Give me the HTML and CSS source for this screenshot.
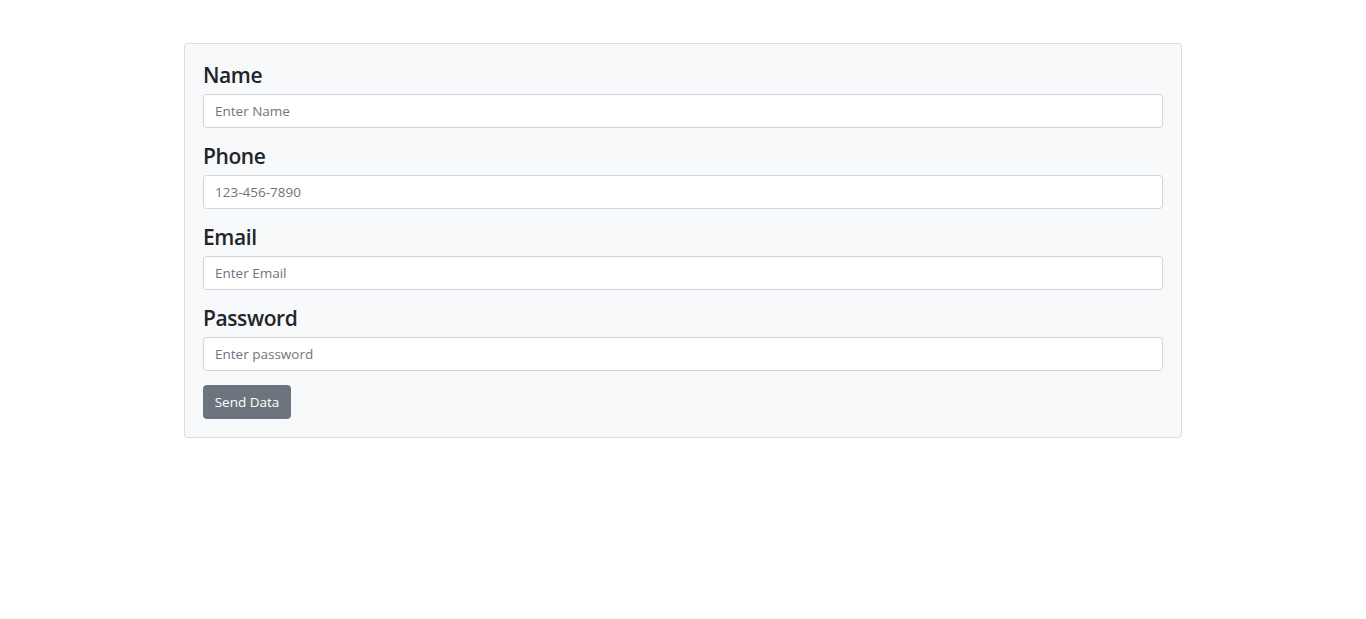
FILE: index.html
```html
<!DOCTYPE html>
<html lang="en">
<head>
<meta charset="utf-8">
<title>Form</title>
<link rel="stylesheet" href="styles.css">
</head>
<body>
<div class="card">
  <form class="form">
    <div class="group">
      <label class="label" for="name">Name</label>
      <input class="control" id="name" type="text" placeholder="Enter Name">
    </div>
    <div class="group">
      <label class="label" for="phone">Phone</label>
      <input class="control" id="phone" type="text" placeholder="123-456-7890">
    </div>
    <div class="group">
      <label class="label" for="email">Email</label>
      <input class="control" id="email" type="text" placeholder="Enter Email">
    </div>
    <div class="group">
      <label class="label" for="pass">Password</label>
      <input class="control" id="pass" type="password" placeholder="Enter password">
    </div>
    <button class="btn" type="button">Send Data</button>
  </form>
</div>
</body>
</html>
```

FILE: styles.css
```css
html, body {
  margin: 0;
  padding: 0;
  background: #ffffff;
  font-family: "Open Sans", "Noto Sans", sans-serif;
  color: #212529;
}

.card {
  box-sizing: border-box;
  width: 998px;
  margin: 43px auto 0;
  padding: 18px;
  background: #f8f9fa;
  border: 1px solid #dcdddf;
  border-radius: 3px;
}

.form {
  display: flex;
  flex-direction: column;
}

.group {
  display: flex;
  flex-direction: column;
  margin-bottom: 15px;
}

.group:last-of-type {
  margin-bottom: 14px;
}

.label {
  font-size: 21px;
  line-height: 26px;
  font-weight: 600;
  margin-bottom: 6px;
  color: #212529;
  letter-spacing: -0.4px;
}

.control {
  box-sizing: border-box;
  height: 34px;
  width: 100%;
  padding: 0 11px;
  font-family: "Open Sans", "Noto Sans", sans-serif;
  font-size: 13.5px;
  color: #495057;
  background: #ffffff;
  border: 1px solid #ced4da;
  border-radius: 3.5px;
  outline: none;
}

.control::placeholder {
  color: #6c757d;
  opacity: 1;
}

.btn {
  align-self: flex-start;
  box-sizing: border-box;
  width: 88px;
  height: 34px;
  padding: 0;
  font-family: "Open Sans", "Noto Sans", sans-serif;
  font-size: 13.5px;
  color: #ffffff;
  background: #6c757d;
  border: 1px solid #6c757d;
  border-radius: 3.5px;
  cursor: pointer;
}
```
